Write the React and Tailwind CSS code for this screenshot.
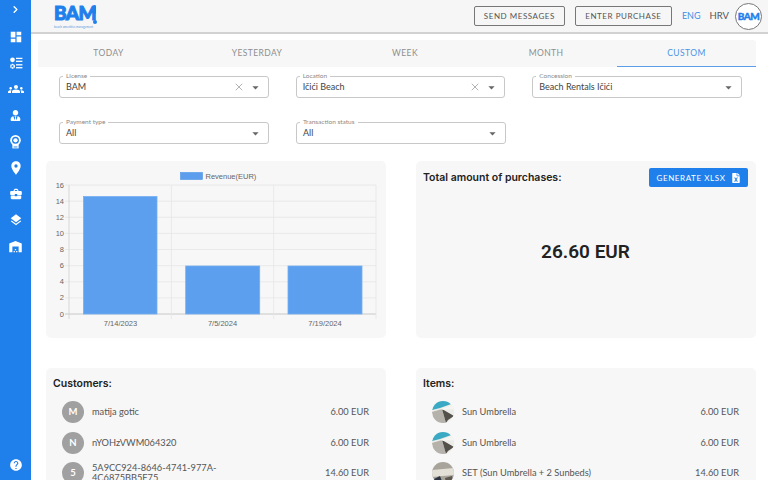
import { ChevronRight, X } from 'lucide-react';
import { FaFileExcel, FaUserTie } from 'react-icons/fa';
import {
  MdArrowDropDown,
  MdBusinessCenter,
  MdDashboard,
  MdGroups,
  MdHelp,
  MdLayers,
  MdLocationOn,
  MdWarehouse,
} from 'react-icons/md';

const body = "font-['Lato','Noto_Sans',sans-serif]";

const tabs = [
  { label: 'TODAY' },
  { label: 'YESTERDAY' },
  { label: 'WEEK' },
  { label: 'MONTH' },
  { label: 'CUSTOM', active: true },
];

const customers = [
  { letter: 'M', name: 'matija gotic', amount: '6.00 EUR' },
  { letter: 'N', name: 'nYOHzVWM064320', amount: '6.00 EUR' },
  { letter: '5', name: '5A9CC924-8646-4741-977A-4C6875BB5F75', amount: '14.60 EUR' },
];

const items = [
  { name: 'Sun Umbrella', amount: '6.00 EUR', set: false },
  { name: 'Sun Umbrella', amount: '6.00 EUR', set: false },
  { name: 'SET (Sun Umbrella + 2 Sunbeds)', amount: '14.60 EUR', set: true },
];

const ticks = [0, 2, 4, 6, 8, 10, 12, 14, 16];

function ChecklistIcon() {
  return (
    <svg viewBox="0 0 24 24" className="h-[14px] w-[14px]" fill="white">
      <circle cx="6" cy="6.5" r="4" />
      <rect x="12" y="3" width="11" height="2.2" />
      <rect x="12" y="8" width="11" height="2.2" />
      <circle cx="6" cy="17.5" r="3" fill="none" stroke="white" strokeWidth="2.6" strokeDasharray="2.4 0.6" />
      <rect x="12" y="14" width="11" height="2.2" />
      <rect x="12" y="19" width="11" height="2.2" />
    </svg>
  );
}

function AwardIcon() {
  return (
    <svg viewBox="0 0 24 24" className="h-[15px] w-[15px]">
      <path d="M7 15v8h10v-8z" fill="white" />
      <circle cx="12" cy="10" r="8.5" fill="white" />
      <circle cx="12" cy="10" r="5.6" fill="#1f80ec" />
      <circle cx="12" cy="10" r="3.4" fill="white" />
      <rect x="9" y="20" width="6" height="1.5" fill="#1f80ec" />
    </svg>
  );
}

function Sidebar() {
  const iconBox = 'flex h-[26.2px] items-center justify-center text-white';
  return (
    <aside className="flex h-full w-[31px] shrink-0 flex-col bg-[#1f80ec]">
      <div className="mb-[6px] flex h-[18px] items-center justify-center text-white">
        <ChevronRight size={11} strokeWidth={3} />
      </div>
      <div className={iconBox}><MdDashboard size={14} /></div>
      <div className={iconBox}><ChecklistIcon /></div>
      <div className={iconBox}><MdGroups size={16} /></div>
      <div className={iconBox}><FaUserTie size={11} /></div>
      <div className={iconBox}><AwardIcon /></div>
      <div className={iconBox}><MdLocationOn size={16} /></div>
      <div className={iconBox}><MdBusinessCenter size={14} /></div>
      <div className={iconBox}><MdLayers size={14} /></div>
      <div className={iconBox}><MdWarehouse size={15} /></div>
      <div className="mt-auto mb-[7px] flex h-[16px] items-center justify-center text-white">
        <MdHelp size={14} />
      </div>
    </aside>
  );
}

function Logo() {
  return (
    <div className="ml-[23px] flex h-full flex-col justify-center">
      <div className="relative h-[18px] w-[42px]">
        <span className="block font-['Lato',sans-serif] text-[19px] leading-[18px] font-black tracking-[-0.6px] text-[#1f80ec] [-webkit-text-stroke:1px_#1f80ec]">
          BAM
        </span>
        <span className="absolute top-[1px] right-0 h-[9px] w-[3px] rounded-full bg-[#1f80ec]" />
        <span className="absolute right-[-1px] bottom-[-2px] h-[4px] w-[4px] rounded-full bg-[#1f80ec]" />
      </div>
      <span className="mt-[3px] text-[3px] leading-[4px] whitespace-nowrap text-[#5b9be0]">
        beach amenities management
      </span>
    </div>
  );
}

function Header() {
  return (
    <header className={`flex h-[34px] shrink-0 items-center border-b-2 border-[#d2d2d2] bg-[#f6f6f6] ${body}`}>
      <Logo />
      <div className="ml-auto flex items-center">
        <button className="h-[20px] w-[91px] rounded-[2px] border border-[#777] text-[8px] tracking-[0.55px] text-[#555]">
          SEND MESSAGES
        </button>
        <button className="ml-[10px] h-[20px] w-[97px] rounded-[2px] border border-[#777] text-[8px] tracking-[0.55px] text-[#555]">
          ENTER PURCHASE
        </button>
        <span className="ml-[10px] text-[9px] text-[#3f8fe6]">ENG</span>
        <span className="ml-[9px] text-[9.5px] text-[#555]">HRV</span>
        <div className="mr-[6px] ml-[6px] flex h-[27px] w-[27px] items-center justify-center rounded-full border border-[#777] bg-white">
          <span className="font-['Lato',sans-serif] text-[10px] font-black tracking-[-0.6px] text-[#1f80ec] [-webkit-text-stroke:0.4px_#1f80ec]">BAM</span>
        </div>
      </div>
    </header>
  );
}

function Tabs() {
  return (
    <div className={`mt-[6px] ml-[7px] grid h-[27px] w-[718px] shrink-0 grid-cols-[141px_156px_140px_142px_139px] rounded-t-[3px] bg-[#f7f7f7] ${body}`}>
      {tabs.map((tab) => (
        <div
          key={tab.label}
          className={
            tab.active
              ? 'flex items-center justify-center border-b border-[#5a9fe8] text-[8.5px] tracking-[0.4px] text-[#4a94e6]'
              : 'flex items-center justify-center text-[8.5px] tracking-[0.4px] text-[#8e8e8e]'
          }
        >
          {tab.label}
        </div>
      ))}
    </div>
  );
}

function Field({ label, value, clearable }) {
  return (
    <div className="relative flex h-[22px] w-[210px] items-center rounded-[3px] border border-[#c8c8c8] pr-[5px] pl-[6px]">
      <span className="absolute top-[-5px] left-[3px] bg-white px-[3px] text-[6.5px] leading-[8px] text-[#8a8a8a]">
        {label}
      </span>
      <span className="text-[9px] text-[#444]">{value}</span>
      <div className="ml-auto flex items-center text-[#666]">
        {clearable && <X size={12} strokeWidth={1} className="mr-[3px]" />}
        <MdArrowDropDown size={15} />
      </div>
    </div>
  );
}

function Filters() {
  return (
    <div className={`mt-[9px] ml-[28px] flex w-[683px] shrink-0 flex-col gap-[24px] ${body}`}>
      <div className="flex gap-[27px]">
        <Field label="License" value="BAM" clearable />
        <Field label="Location" value="Ičići Beach" clearable />
        <Field label="Concession" value="Beach Rentals Ičići" />
      </div>
      <div className="flex gap-[27px]">
        <Field label="Payment type" value="All" />
        <Field label="Transaction status" value="All" />
      </div>
    </div>
  );
}

function RevenueChart() {
  return (
    <svg viewBox="0 0 340 177" className="h-full w-full">
      <g fontFamily="Liberation Sans, sans-serif" fontSize="7.5" fill="#666">
        <rect x="134.5" y="11.5" width="22" height="7" fill="#5c9eed" stroke="#4f93e6" strokeWidth="0.6" />
        <text x="159.5" y="18">Revenue(EUR)</text>
        {ticks.map((t) => {
          const y = 153 - t * 8.06;
          return (
            <g key={t}>
              <line x1="19" x2="330" y1={y} y2={y} stroke={t === 0 ? '#bdbdbd' : '#e6e6e6'} strokeWidth="0.8" />
              <text x="18" y={y + 2.6} textAnchor="end">{t}</text>
            </g>
          );
        })}
        <line x1="23" x2="23" y1="24" y2="158" stroke="#cfcfcf" strokeWidth="0.8" />
        <line x1="125.4" x2="125.4" y1="24" y2="158" stroke="#e6e6e6" strokeWidth="0.8" />
        <line x1="227.7" x2="227.7" y1="24" y2="158" stroke="#e6e6e6" strokeWidth="0.8" />
        <line x1="330" x2="330" y1="24" y2="158" stroke="#e6e6e6" strokeWidth="0.8" />
        <rect x="37.5" y="35.5" width="73.5" height="117.5" fill="#5c9fee" stroke="#74aef1" strokeWidth="0.8" />
        <rect x="139.7" y="105" width="74" height="48" fill="#5c9fee" stroke="#74aef1" strokeWidth="0.8" />
        <rect x="242" y="105" width="74" height="48" fill="#5c9fee" stroke="#74aef1" strokeWidth="0.8" />
        <text x="74.5" y="165" textAnchor="middle">7/14/2023</text>
        <text x="176.5" y="165" textAnchor="middle">7/5/2024</text>
        <text x="279" y="165" textAnchor="middle">7/19/2024</text>
      </g>
    </svg>
  );
}

function UmbrellaThumb({ set }) {
  if (set) {
    return (
      <svg viewBox="0 0 22 22" className="h-[22px] w-[22px] shrink-0 rounded-full">
        <rect width="22" height="22" fill="#a8a49c" />
        <path d="M0 8 L22 6 L22 13 L0 15Z" fill="#e3e0d8" />
        <path d="M0 18 L8 14 L11 22 L0 22Z" fill="#2c3540" />
        <path d="M13 16 L20 14 L22 22 L14 22Z" fill="#5c574f" />
      </svg>
    );
  }
  return (
    <svg viewBox="0 0 22 22" className="h-[22px] w-[22px] shrink-0 rounded-full">
      <rect width="22" height="22" fill="#ecece8" />
      <path d="M3 0H22V2L8 7L0 9Z" fill="#3aa9c4" />
      <path d="M0 11L10 8L14 22H2Z" fill="#b5b2ab" />
      <path d="M10 8L22 15L16 19L14 22Z" fill="#54504a" />
      <path d="M8 8L20 4L22 8L12 9Z" fill="#f5f5f1" />
    </svg>
  );
}

function ListRow({ lead, name, amount }) {
  return (
    <div className="flex h-[30.5px] items-center pr-[17px] pl-[16px]">
      {lead}
      <span className="ml-[8px] w-[135px] text-[9.25px] leading-[10.5px] text-[#555]">{name}</span>
      <span className="ml-auto text-[9.25px] text-[#555]">{amount}</span>
    </div>
  );
}

export default function App() {
  return (
    <div className="flex h-[480px] w-[768px] overflow-hidden bg-white">
      <Sidebar />
      <div className="flex min-w-0 flex-1 flex-col">
        <Header />
        <Tabs />
        <Filters />
        <div className="mt-[17px] ml-[15px] grid w-[710px] shrink-0 grid-cols-2 gap-x-[30px] gap-y-[30px]">
          <div className="h-[177px] rounded-[5px] bg-[#f7f7f7]">
            <RevenueChart />
          </div>
          <div className="flex h-[177px] flex-col rounded-[5px] bg-[#f7f7f7] pt-[7px] pr-[8px] pl-[7px]">
            <div className="flex items-center justify-between">
              <h3 className="font-['Inter',sans-serif] text-[10.5px] font-semibold text-[#222]">
                Total amount of purchases:
              </h3>
              <button className={`flex h-[19px] w-[99px] items-center justify-center gap-[5px] rounded-[2px] bg-[#1f80ec] text-[8px] tracking-[0.6px] text-white ${body}`}>
                GENERATE XLSX
                <FaFileExcel size={10} />
              </button>
            </div>
            <div className="flex flex-1 items-center justify-center pb-[20px] font-['Roboto',sans-serif] text-[19px] font-semibold text-[#222]">
              26.60 EUR
            </div>
          </div>
          <div className={`h-[140px] rounded-[5px] bg-[#f7f7f7] pt-[9px] ${body}`}>
            <h3 className="mb-[6px] pl-[7px] font-['Inter',sans-serif] text-[10.5px] leading-[14px] font-semibold text-[#222]">
              Customers:
            </h3>
            {customers.map((c) => (
              <ListRow
                key={c.name}
                name={c.name}
                amount={c.amount}
                lead={
                  <div className="flex h-[22px] w-[22px] shrink-0 items-center justify-center rounded-full bg-[#a0a0a0] text-[9.5px] font-bold text-white">
                    {c.letter}
                  </div>
                }
              />
            ))}
          </div>
          <div className={`h-[140px] rounded-[5px] bg-[#f7f7f7] pt-[9px] ${body}`}>
            <h3 className="mb-[6px] pl-[7px] font-['Inter',sans-serif] text-[10.5px] leading-[14px] font-semibold text-[#222]">
              Items:
            </h3>
            {items.map((item, i) => (
              <ListRow
                key={i}
                name={<span className="whitespace-nowrap">{item.name}</span>}
                amount={item.amount}
                lead={<UmbrellaThumb set={item.set} />}
              />
            ))}
          </div>
        </div>
      </div>
    </div>
  );
}
